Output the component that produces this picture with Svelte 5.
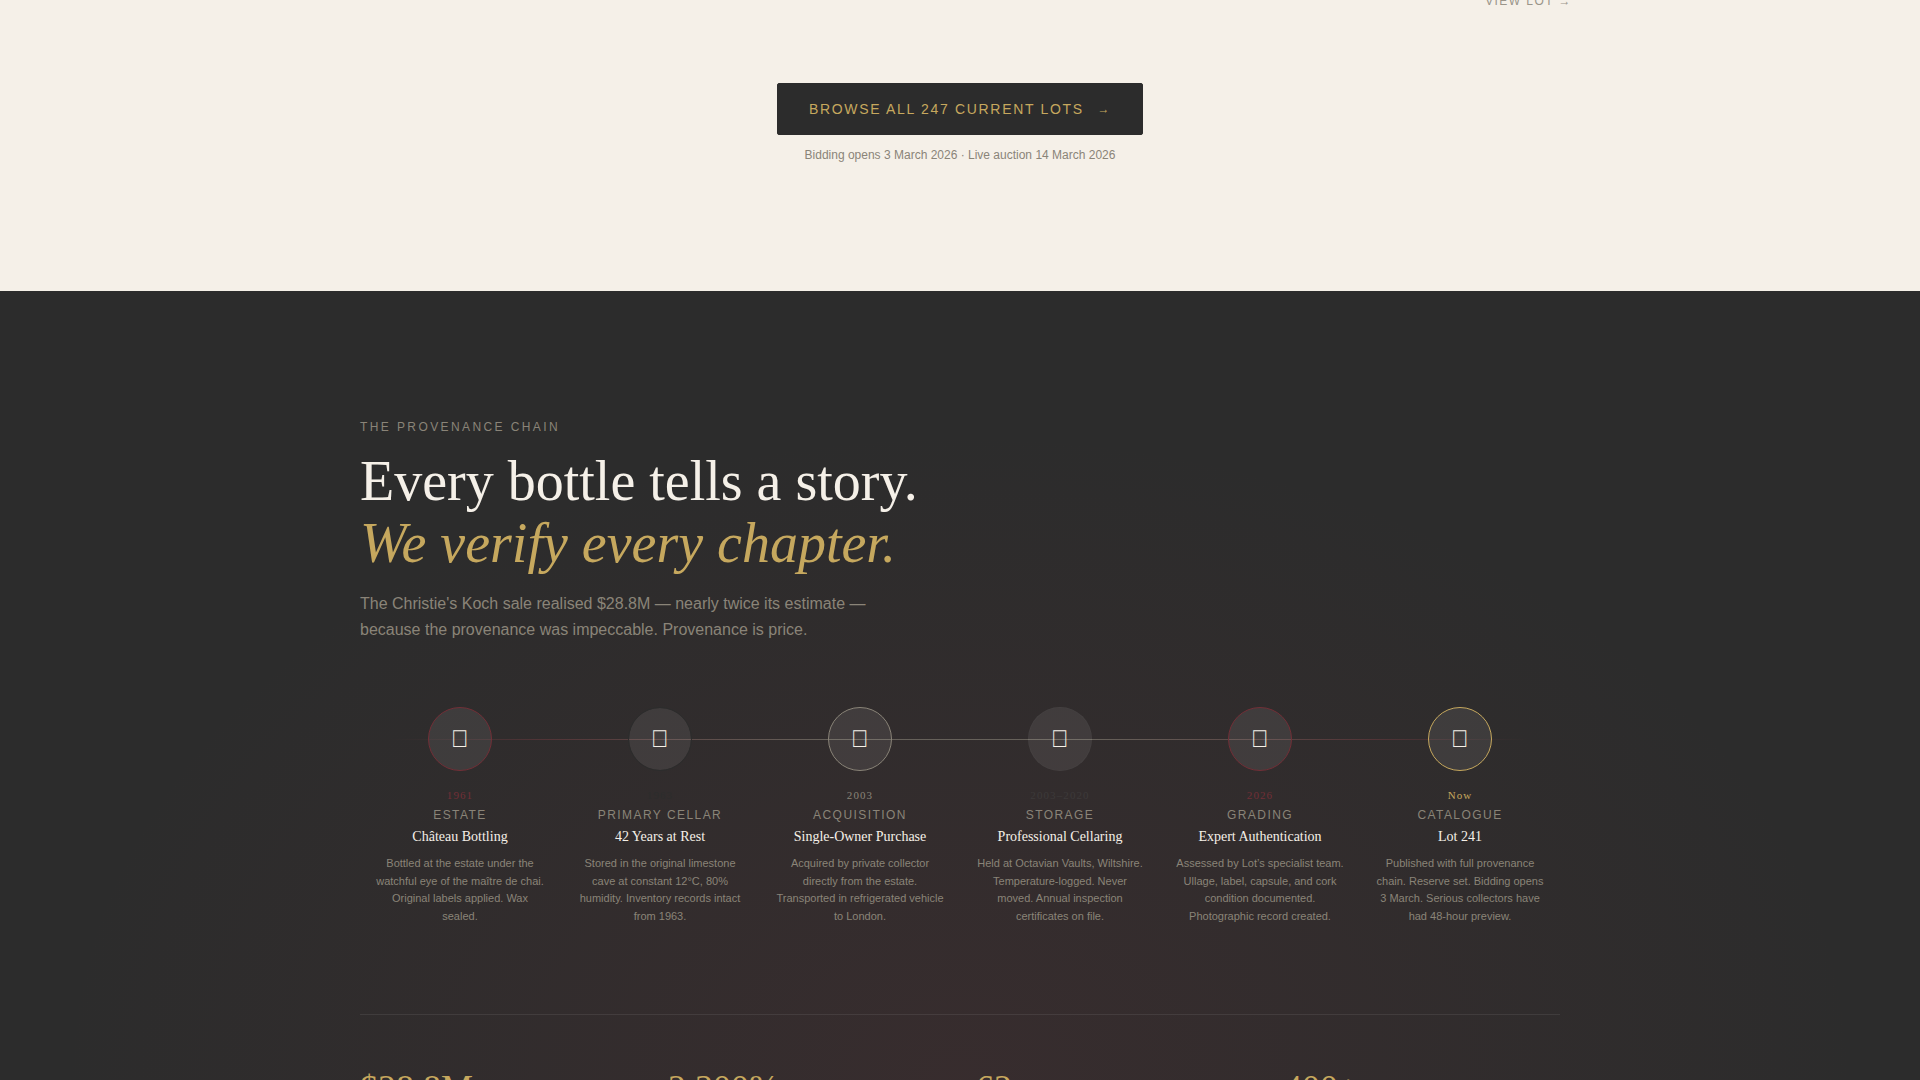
<script>
  const steps = [
    { v: 'wine', year: '1961', cat: 'Estate', title: 'Château Bottling', desc: 'Bottled at the estate under the watchful eye of the maître de chai. Original labels applied. Wax sealed.' },
    { v: 'ghost', year: '1963', cat: 'Primary Cellar', title: '42 Years at Rest', desc: 'Stored in the original limestone cave at constant 12°C, 80% humidity. Inventory records intact from 1963.' },
    { v: 'light', year: '2003', cat: 'Acquisition', title: 'Single-Owner Purchase', desc: 'Acquired by private collector directly from the estate. Transported in refrigerated vehicle to London.' },
    { v: 'plain', year: '2003–2020', cat: 'Storage', title: 'Professional Cellaring', desc: 'Held at Octavian Vaults, Wiltshire. Temperature-logged. Never moved. Annual inspection certificates on file.' },
    { v: 'wine', year: '2026', cat: 'Grading', title: 'Expert Authentication', desc: 'Assessed by Lot’s specialist team. Ullage, label, capsule, and cork condition documented. Photographic record created.' },
    { v: 'gold', year: 'Now', cat: 'Catalogue', title: 'Lot 241', desc: 'Published with full provenance chain. Reserve set. Bidding opens 3 March. Serious collectors have had 48-hour preview.' }
  ];
  const stats = ['$28.8M', '2,300%', '62', '400+'];
  const missing = '\uE000';
</script>

<div class="page">
  <section class="cream">
    <div class="lot-row"><span class="view">VIEW LOT →</span></div>
    <div class="cta">
      <button class="browse">BROWSE ALL 247 CURRENT LOTS <span class="arrow">→</span></button>
      <p class="note">Bidding opens 3 March 2026 · Live auction 14 March 2026</p>
    </div>
  </section>

  <section class="dark">
    <div class="inner">
      <div class="eyebrow">THE PROVENANCE CHAIN</div>
      <h2>Every bottle tells a story.<br /><em>We verify every chapter.</em></h2>
      <p class="lead">The Christie's Koch sale realised $28.8M — nearly twice its estimate —<br />because the provenance was impeccable. Provenance is price.</p>

      <div class="chain">
        <div class="line"></div>
        {#each steps as s}
          <div class="step {s.v}">
            <div class="node">{missing}</div>
            <div class="year">{s.year}</div>
            <div class="cat">{s.cat}</div>
            <div class="title">{s.title}</div>
            <div class="desc">{s.desc}</div>
          </div>
        {/each}
      </div>

      <div class="stats">
        {#each stats as v}
          <div class="stat">{v}</div>
        {/each}
      </div>
    </div>
  </section>
</div>

<style>
  :global(html), :global(body) { margin: 0; height: 100%; overflow: hidden; }
  .page { height: 1080px; overflow: hidden; font-family: "Liberation Sans", Arial, sans-serif; }
  .cream {
    height: 291px;
    box-sizing: border-box;
    background: #f5f0e8;
    overflow: hidden;
  }
  .lot-row { display: flex; justify-content: flex-end; width: 1200px; margin: -6px auto 0; height: 15px; }
  .view { font-size: 12px; letter-spacing: 1.44px; color: #9a958a; line-height: 15px; margin-right: -12px; }
  .cta { display: flex; flex-direction: column; align-items: center; margin-top: 74px; }
  .browse {
    width: 366px; height: 52px; box-sizing: border-box;
    background: #2c2c2c; color: #c6a85e;
    border: 1px solid #2c2c2c; border-radius: 2px;
    font-family: inherit; font-size: 14px; letter-spacing: 1.68px; padding: 0;
  }
  .arrow { margin-left: 8px; font-size: 12px; vertical-align: 1px; }
  .note { margin: 11px 0 0; font-size: 12px; line-height: 18px; color: #8a8478; }

  .dark {
    height: 789px;
    box-sizing: border-box;
    padding-top: 128px;
    background: radial-gradient(ellipse 900px 650px at 50% 100%, rgba(114, 47, 55, 0.16) 0%, rgba(114, 47, 55, 0) 100%), #2c2c2c;
    overflow: hidden;
  }
  .inner { width: 1200px; margin: 0 auto; }
  .eyebrow { font-size: 12px; line-height: 16px; letter-spacing: 2.4px; color: #8a8478; }
  h2 { margin: 15px 0 0; font: 400 56px/62px "Liberation Serif", "Times New Roman", serif; color: #f5f0e8; }
  h2 em { color: #c6a85e; font-style: italic; }
  .lead { margin: 17px 0 0; font-size: 16px; line-height: 26px; color: #8a8478; }

  .chain { position: relative; display: grid; grid-template-columns: repeat(6, 1fr); margin-top: 64px; }
  .line {
    position: absolute; left: 30px; right: 30px; top: 32px; height: 1px;
    opacity: 0.6;
    background: linear-gradient(90deg, transparent, #6a3a3e 14%, #8a8478 38%, #8a8478 62%, #6a3a3e 86%, transparent);
  }
  .step { display: flex; flex-direction: column; align-items: center; text-align: center; padding: 0 16px; }
  .node {
    position: relative;
    width: 64px; height: 64px; box-sizing: border-box; border-radius: 50%;
    display: flex; align-items: center; justify-content: center;
    background: rgba(255, 255, 255, 0.08);
    border: 1px solid rgba(255, 255, 255, 0.02);
    color: #f5f0e8; font-size: 24px; line-height: 1;
  }
  .wine .node { border-color: #722f37; }
  .ghost .node { border-color: #2c2c2c; background-clip: padding-box; }
  .light .node { border-color: #8a8478; }
  .gold .node { border-color: #c6a85e; }
  .year { margin-top: 16px; font: 11px/16px "Liberation Serif", serif; letter-spacing: 1.1px; color: #8a8478; }
  .wine .year { color: #722f37; }
  .ghost .year { color: #2c2c2c; }
  .plain .year { color: #3d3a3a; }
  .gold .year { color: #c6a85e; }
  .cat { margin-top: 4px; font-size: 12px; line-height: 16px; letter-spacing: 1.44px; color: #8a8478; text-transform: uppercase; }
  .title { margin-top: 4px; font: 14px/20px "Liberation Serif", serif; color: #f5f0e8; }
  .desc { margin-top: 8px; font-size: 11px; line-height: 17.6px; color: #8a8478; }

  .stats { display: grid; grid-template-columns: repeat(4, 1fr); column-gap: 32px; margin-top: 89px; padding-top: 53px; border-top: 1px solid rgba(255, 255, 255, 0.08); }
  .stat { font: 36px/40px "Liberation Serif", serif; color: #c6a85e; }
</style>
